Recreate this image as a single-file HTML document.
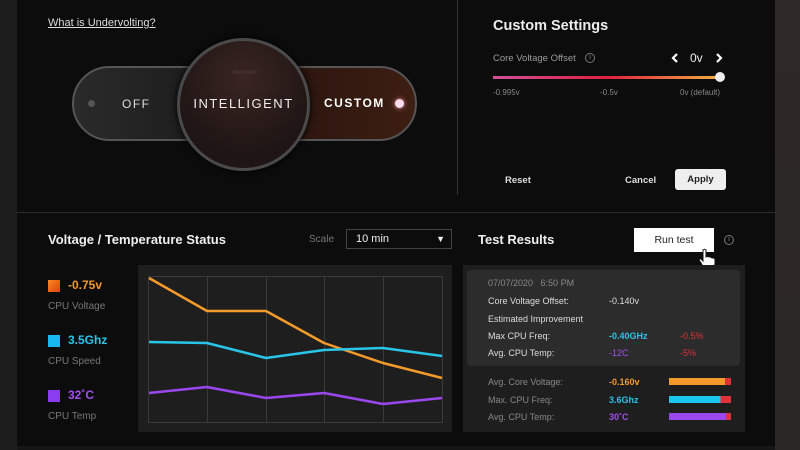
<!DOCTYPE html><html><head><style>
*{margin:0;padding:0;box-sizing:border-box}
body{width:800px;height:450px;background:#0b0b0b;font-family:"Liberation Sans",sans-serif;position:relative;overflow:hidden;color:#eee}
.a{position:absolute}
</style></head><body>
<div class="a" style="left:0;top:0;width:17px;height:450px;background:#1d1d1d"></div>
<div class="a" style="left:775px;top:0;width:25px;height:450px;background:linear-gradient(#2e2826,#2a2725)"></div>
<div class="a" style="left:17px;top:0;width:758px;height:450px;background:#0c0c0c"></div>
<div class="a" style="left:17px;top:446px;width:758px;height:4px;background:#151515"></div>
<div class="a" style="left:457px;top:0;width:1px;height:195px;background:#333"></div>
<div class="a" style="left:17px;top:212px;width:758px;height:1px;background:#2a2a2a"></div>

<div class="a" style="left:48px;top:17px;font-size:11px;text-decoration:underline;color:#ddd">What is Undervolting?</div>

<div class="a" style="left:72px;top:66px;width:345px;height:75px;border-radius:38px;border:2px solid #555;background:linear-gradient(90deg,#2a2a2a 0%,#1a1a1a 45%,#2a150e 60%,#3d1e12 100%)"></div>
<div class="a" style="left:88px;top:100px;width:7px;height:7px;border-radius:50%;background:#555"></div>
<div class="a" style="left:122px;top:97px;font-size:12px;letter-spacing:1.5px;color:#ddd">OFF</div>
<div class="a" style="left:324px;top:96px;font-size:12px;letter-spacing:1.5px;font-weight:bold;color:#fff">CUSTOM</div>
<div class="a" style="left:395px;top:99px;width:9px;height:9px;border-radius:50%;background:#fde;box-shadow:0 0 5px #f9a"></div>
<div class="a" style="left:177px;top:38px;width:133px;height:133px;border-radius:50%;border:3px solid #4a4a4a;background:radial-gradient(circle at 50% 30%,#3a2522,#1e1514 70%);box-shadow:0 0 8px #000"></div>
<div class="a" style="left:232px;top:70px;width:25px;height:4px;border-radius:2px;background:#3e2c29"></div>
<div class="a" style="left:177px;top:96px;width:133px;text-align:center;font-size:13px;letter-spacing:1.5px;color:#eee">INTELLIGENT</div>

<div class="a" style="left:493px;top:18px;font-size:14.5px;font-weight:bold;color:#eee">Custom Settings</div>
<div class="a" style="left:493px;top:53px;font-size:9.5px;color:#999">Core Voltage Offset</div>
<div class="a" style="left:585px;top:53px;width:10px;height:10px;border-radius:50%;border:1px solid #777;font-size:7px;color:#888;text-align:center;line-height:8px">i</div>
<svg class="a" style="left:671px;top:53px" width="8" height="10"><path d="M6 1 L2 5 L6 9" stroke="#fff" stroke-width="2.2" fill="none"/></svg>
<div class="a" style="left:690px;top:51px;font-size:12px">0v</div>
<svg class="a" style="left:715px;top:53px" width="8" height="10"><path d="M2 1 L6 5 L2 9" stroke="#fff" stroke-width="2.2" fill="none"/></svg>
<div class="a" style="left:493px;top:76px;width:228px;height:3px;background:linear-gradient(90deg,#d0509a,#e02040 50%,#f0b040)"></div>
<div class="a" style="left:715px;top:72px;width:10px;height:10px;border-radius:50%;background:#eee"></div>
<div class="a" style="left:493px;top:88px;font-size:8px;color:#888">-0.995v</div>
<div class="a" style="left:600px;top:88px;font-size:8px;color:#888">-0.5v</div>
<div class="a" style="left:680px;top:88px;font-size:8px;color:#888">0v (default)</div>
<div class="a" style="left:505px;top:175px;font-size:9.5px;font-weight:bold;color:#ddd">Reset</div>
<div class="a" style="left:625px;top:175px;font-size:9.5px;font-weight:bold;color:#ddd">Cancel</div>
<div class="a" style="left:675px;top:169px;width:51px;height:21px;border-radius:3px;background:#eee;color:#222;font-size:9.5px;font-weight:bold;text-align:center;line-height:21px">Apply</div>

<div class="a" style="left:48px;top:232px;font-size:13px;font-weight:bold;color:#eee">Voltage / Temperature Status</div>
<div class="a" style="left:309px;top:234px;font-size:10px;color:#777">Scale</div>
<div class="a" style="left:346px;top:229px;width:106px;height:20px;border:1px solid #444;font-size:11px;line-height:18px;padding-left:9px;color:#eee">10 min<span style="position:absolute;right:6px;top:0;font-size:9px">&#9660;</span></div>

<div class="a" style="left:48px;top:280px;width:12px;height:12px;background:linear-gradient(135deg,#f88a20,#e04010)"></div>
<div class="a" style="left:68px;top:278px;font-size:12px;font-weight:bold;color:#f39a2a">-0.75v</div>
<div class="a" style="left:48px;top:301px;font-size:10px;color:#777">CPU Voltage</div>
<div class="a" style="left:48px;top:335px;width:12px;height:12px;background:#18b8f0"></div>
<div class="a" style="left:68px;top:333px;font-size:12px;font-weight:bold;color:#29c5e8">3.5Ghz</div>
<div class="a" style="left:48px;top:356px;font-size:10px;color:#777">CPU Speed</div>
<div class="a" style="left:48px;top:390px;width:12px;height:12px;background:#8a3cf0"></div>
<div class="a" style="left:68px;top:388px;font-size:12px;font-weight:bold;color:#a050f0">32˚C</div>
<div class="a" style="left:48px;top:411px;font-size:10px;color:#777">CPU Temp</div>

<div class="a" style="left:138px;top:265px;width:314px;height:167px;background:#1e1e1e"></div>
<svg class="a" style="left:0;top:0" width="800" height="450">
<g stroke="#3a3a3a" fill="none" stroke-width="1"><rect x="148.5" y="276.5" width="294" height="146"/><line x1="207.5" y1="276" x2="207.5" y2="422"/><line x1="266.5" y1="276" x2="266.5" y2="422"/><line x1="324.5" y1="276" x2="324.5" y2="422"/><line x1="383.5" y1="276" x2="383.5" y2="422"/></g>
<g fill="none" stroke-width="2.5" stroke-linejoin="round">
<polyline stroke="#f39a2a" points="149,278 207,311 266,311 324,343 383,363 442,378"/>
<polyline stroke="#29c5e8" points="149,342 207,343 266,358 324,350 383,348 442,356"/>
<polyline stroke="#9a48ee" points="149,393 207,387 266,398 324,393 383,404 442,398"/>
</g></svg>

<div class="a" style="left:478px;top:232px;font-size:13px;font-weight:bold;color:#eee">Test Results</div>
<div class="a" style="left:634px;top:228px;width:80px;height:24px;background:#fff;color:#222;font-size:10.5px;text-align:center;line-height:24px">Run test</div>
<div class="a" style="left:724px;top:235px;width:10px;height:10px;border-radius:50%;border:1px solid #777;font-size:7px;color:#888;text-align:center;line-height:8px">i</div>
<svg class="a" style="left:697px;top:248px" width="20" height="22"><path d="M6 2 Q7.5 0.5 9 2 L9 9 Q10.5 8 12 9 Q13.5 8.5 15 10 Q16.5 9.5 18 11 L18 16 Q17 20 14 21 L9 21 Q6 19 4 15 L2 12 Q2 10.5 4 11 L6 13 Z" fill="#fff" stroke="#111" stroke-width="1"/></svg>
<div class="a" style="left:463px;top:265px;width:282px;height:167px;background:#1e1e1e"></div>
<div class="a" style="left:467px;top:270px;width:273px;height:96px;border-radius:4px;background:#2c2c2c"></div>
<div class="a" style="left:488px;top:278px;font-size:9px;color:#888">07/07/2020&nbsp;&nbsp; 6:50 PM</div>
<div class="a" style="left:488px;top:296px;font-size:9px;color:#ddd">Core Voltage Offset:</div>
<div class="a" style="left:609px;top:296px;font-size:9px;color:#ddd">-0.140v</div>
<div class="a" style="left:488px;top:314px;font-size:9px;color:#ddd">Estimated Improvement</div>
<div class="a" style="left:488px;top:331px;font-size:9px;color:#ddd">Max CPU Freq:</div>
<div class="a" style="left:609px;top:331px;font-size:9px;font-weight:bold;color:#29c5e8">-0.40GHz</div>
<div class="a" style="left:680px;top:331px;font-size:9px;color:#e0303a">-0.5%</div>
<div class="a" style="left:488px;top:348px;font-size:9px;color:#ddd">Avg. CPU Temp:</div>
<div class="a" style="left:609px;top:348px;font-size:9px;color:#a050f0">-12C</div>
<div class="a" style="left:680px;top:348px;font-size:9px;color:#e0303a">-5%</div>
<div class="a" style="left:488px;top:377px;font-size:9px;color:#888">Avg. Core Voltage:</div>
<div class="a" style="left:609px;top:377px;font-size:9px;font-weight:bold;color:#f39a2a">-0.160v</div>
<div class="a" style="left:669px;top:378px;width:62px;height:7px;background:linear-gradient(90deg,#f39a2a 90%,#e0303a 90%)"></div>
<div class="a" style="left:488px;top:395px;font-size:9px;color:#888">Max. CPU Freq:</div>
<div class="a" style="left:609px;top:395px;font-size:9px;font-weight:bold;color:#29c5e8">3.6Ghz</div>
<div class="a" style="left:669px;top:396px;width:62px;height:7px;background:linear-gradient(90deg,#18c8ee 83%,#e0303a 83%)"></div>
<div class="a" style="left:488px;top:412px;font-size:9px;color:#888">Avg. CPU Temp:</div>
<div class="a" style="left:609px;top:412px;font-size:9px;font-weight:bold;color:#a050f0">30˚C</div>
<div class="a" style="left:669px;top:413px;width:62px;height:7px;background:linear-gradient(90deg,#9a48ee 92%,#e0303a 92%)"></div>
</body></html>
